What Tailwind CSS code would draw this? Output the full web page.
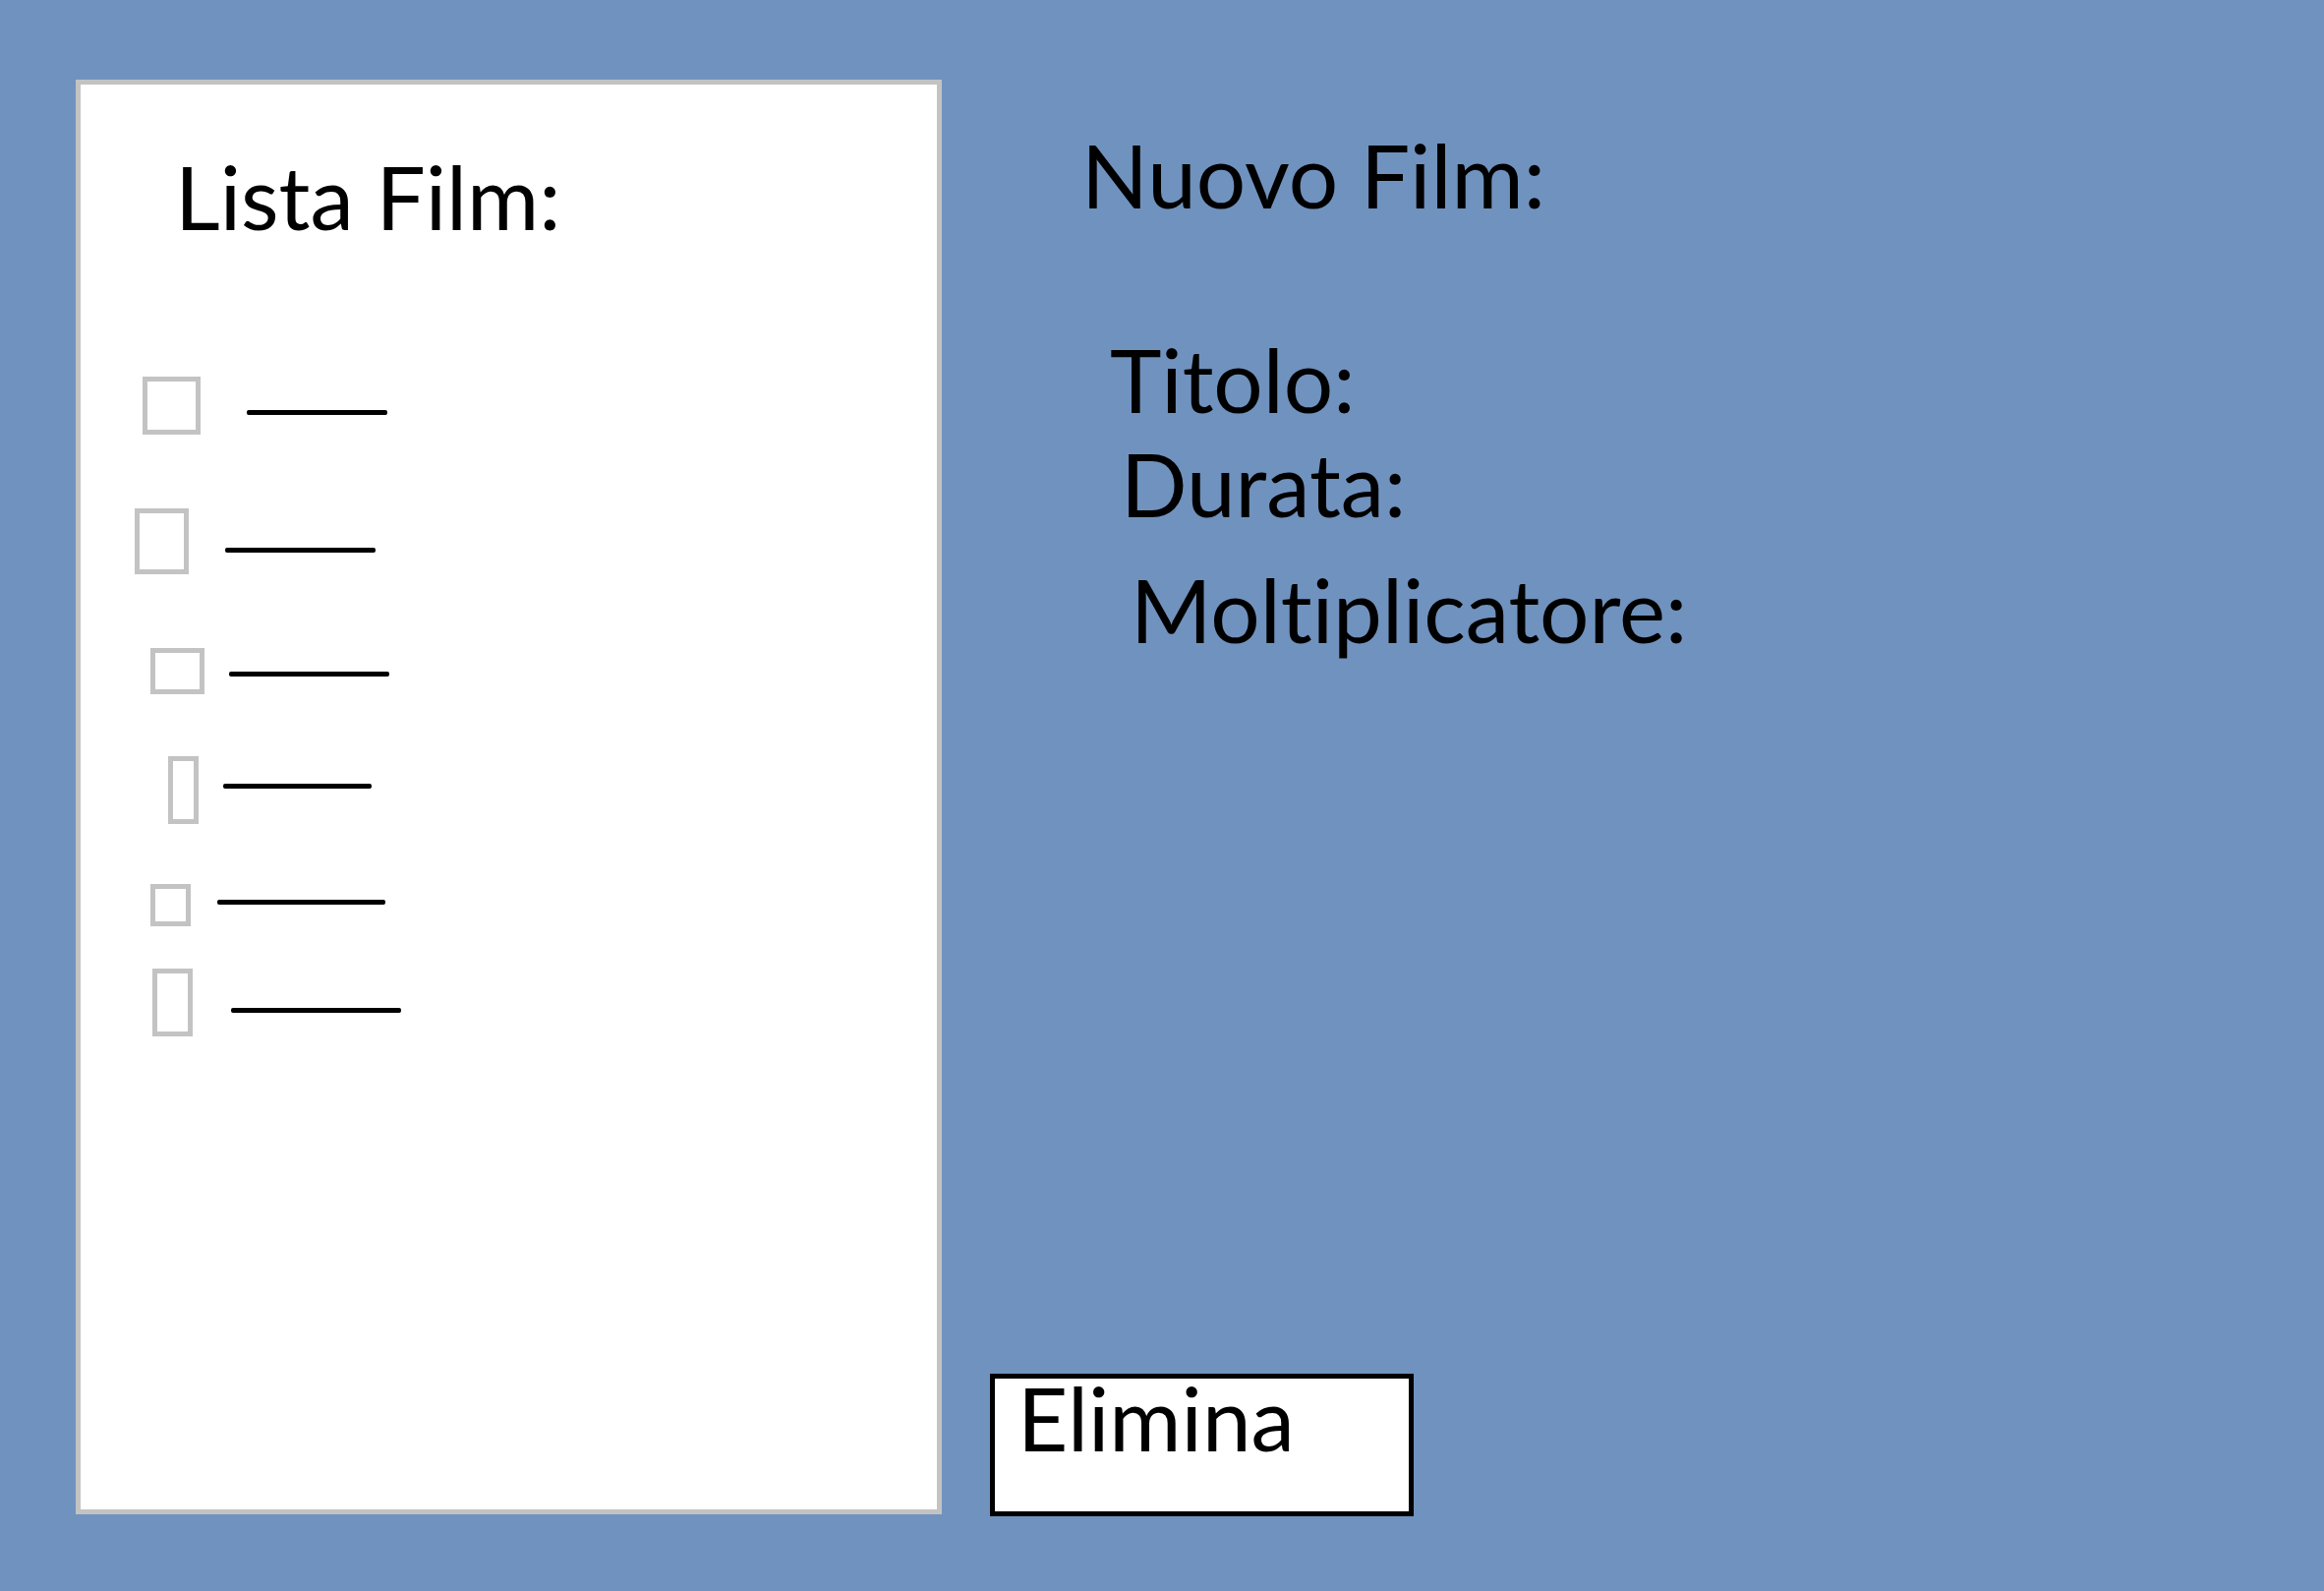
<!DOCTYPE html>
<html lang="it">
<head>
<meta charset="utf-8">
<meta name="viewport" content="width=device-width, initial-scale=1">
<title>Lista Film</title>
<script src="https://cdn.jsdelivr.net/npm/@tailwindcss/browser@4"></script>
</head>
<body class="bg-[#7092be] font-[Lato,sans-serif] text-[89px] leading-[100px] text-black [font-variant-ligatures:none]">
<main class="grid min-h-screen grid-cols-[minmax(0,881fr)_minmax(0,1406fr)] pt-[81px] pb-[76px] pl-[77px]">
  <section class="mb-[2px] border-5 border-[#c3c3c3] bg-white pt-[64px]">
    <h2 class="pl-[96px]">Lista Film:</h2>
    <ul class="mt-[133px]">
      <li class="pl-[63px]">
        <label class="flex items-start gap-[47px]">
          <input type="checkbox" aria-label="Film 1" class="h-[59px] w-[59px] appearance-none border-5 border-[#c3c3c3]">
          <span class="mt-[34px] h-[5px] w-[143px] rounded-xs bg-black"></span>
        </label>
      </li>
      <li class="mt-[75px] pl-[55px]">
        <label class="flex items-start gap-[37px]">
          <input type="checkbox" aria-label="Film 2" class="h-[67px] w-[55px] appearance-none border-5 border-[#c3c3c3]">
          <span class="mt-[40px] h-[5px] w-[153px] rounded-xs bg-black"></span>
        </label>
      </li>
      <li class="mt-[75px] pl-[71px]">
        <label class="flex items-start gap-[25px]">
          <input type="checkbox" aria-label="Film 3" class="h-[47px] w-[55px] appearance-none border-5 border-[#c3c3c3]">
          <span class="mt-[24px] h-[5px] w-[163px] rounded-xs bg-black"></span>
        </label>
      </li>
      <li class="mt-[63px] pl-[89px]">
        <label class="flex items-start gap-[25px]">
          <input type="checkbox" aria-label="Film 4" class="h-[69px] w-[31px] appearance-none border-5 border-[#c3c3c3]">
          <span class="mt-[28px] h-[5px] w-[151px] rounded-xs bg-black"></span>
        </label>
      </li>
      <li class="mt-[61px] pl-[71px]">
        <label class="flex items-start gap-[27px]">
          <input type="checkbox" aria-label="Film 5" class="h-[43px] w-[41px] appearance-none border-5 border-[#c3c3c3]">
          <span class="mt-[16px] h-[5px] w-[171px] rounded-xs bg-black"></span>
        </label>
      </li>
      <li class="mt-[43px] pl-[73px]">
        <label class="flex items-start gap-[39px]">
          <input type="checkbox" aria-label="Film 6" class="h-[69px] w-[41px] appearance-none border-5 border-[#c3c3c3]">
          <span class="mt-[40px] h-[5px] w-[173px] rounded-xs bg-black"></span>
        </label>
      </li>
    </ul>
  </section>

  <form class="flex flex-col items-start pt-[47px] pl-[49px]">
    <h2 class="pl-[93px]">Nuovo Film:</h2>
    <div class="mt-[108px] flex w-full pl-[122px]">
      <label for="titolo">Titolo:</label>
      <input id="titolo" type="text" class="min-w-0 flex-1 bg-transparent pl-4 outline-none">
    </div>
    <div class="mt-[6px] flex w-full pl-[133px]">
      <label for="durata">Durata:</label>
      <input id="durata" type="text" class="min-w-0 flex-1 bg-transparent pl-4 outline-none">
    </div>
    <div class="mt-[28px] flex w-full pl-[143px]">
      <label for="moltiplicatore">Moltiplicatore:</label>
      <input id="moltiplicatore" type="text" class="min-w-0 flex-1 bg-transparent pl-4 outline-none">
    </div>
    <button type="button" class="mt-auto w-[431px] border-5 border-black bg-white pb-[55px] pl-[23px] text-left leading-[80px]">Elimina</button>
  </form>
</main>
</body>
</html>
